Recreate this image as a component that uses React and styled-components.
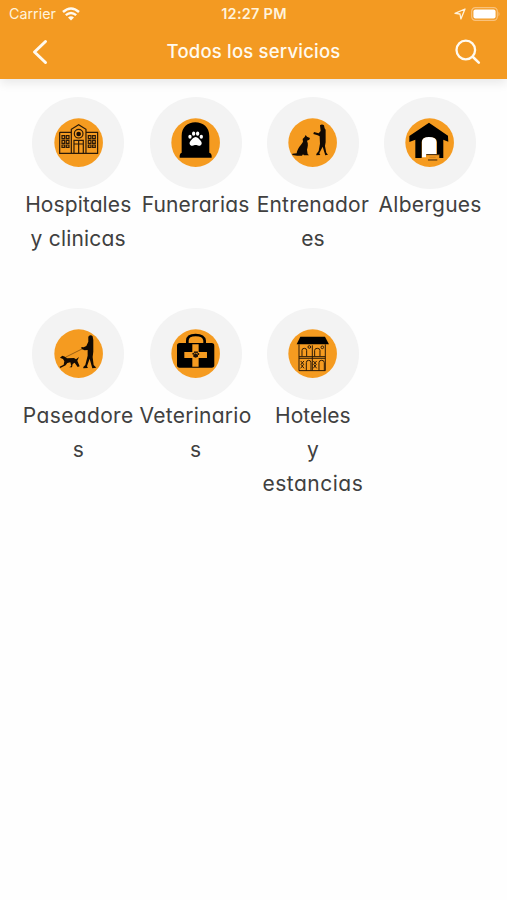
import styled, { createGlobalStyle } from "styled-components";

const GlobalStyle = createGlobalStyle`
  * {
    box-sizing: border-box;
  }
  body {
    margin: 0;
    background: #fefefe;
    font-family: Inter, "Open Sans", sans-serif;
  }
`;

const HospitalIcon = () => (
  <Glyph viewBox="77 78 148 148">
    <circle cx="151" cy="152" r="73" fill="#f59b20" />
    <g fill="none" stroke="#2b1a08" strokeWidth="3.6">
      <path d="M129 184V112L151 98L173 112V184" />
      <path d="M94 121H129M94 121V184H208V121H173" />
      <path d="M137 184V145H165V184M151 145V184M137 156H165" />
      <circle cx="151" cy="125" r="13" />
      <path d="M101 131h8v9h-8zM114 131h8v9h-8zM101 145h8v9h-8zM114 145h8v9h-8zM101 159h8v7h-8zM114 159h8v7h-8z" />
      <path d="M180 131h8v9h-8zM193 131h8v9h-8zM180 145h8v9h-8zM193 145h8v9h-8zM180 159h8v7h-8zM193 159h8v7h-8z" />
    </g>
    <circle cx="151" cy="126" r="7" fill="#1c1006" />
  </Glyph>
);

const GraveIcon = () => (
  <Glyph viewBox="75 78 148 148">
    <circle cx="149" cy="152" r="73" fill="#f59b20" />
    <path d="M107 182V132C107 106 125 91 148 91S190 106 190 132V182Q197 184 197 191V197H101V191Q101 184 107 182Z" fill="#000" />
    <g fill="#fff">
      <path d="M149 135C156 135 159 142 164 146C170 153 167 161 159 161C154 161 153 159 149 159S144 161 139 161C131 161 128 153 134 146C139 142 142 135 149 135Z" />
      <ellipse cx="132" cy="134" rx="5" ry="6" />
      <ellipse cx="143" cy="125" rx="5" ry="6.5" />
      <ellipse cx="155" cy="125" rx="5" ry="6.5" />
      <ellipse cx="166" cy="134" rx="5" ry="6" />
    </g>
  </Glyph>
);

const TrainerIcon = () => (
  <Glyph viewBox="75 78 148 148">
    <circle cx="149" cy="152" r="73" fill="#f59b20" />
    <path d="M88 185L101 184C103 169 115 158 120 149L119 141L125 135L128 129L132 134L141 138L139 143L132 146C137 156 134 166 132 173L134 186L138 190H123L120 187L117 191H103L88 189Z" fill="#120a03" />
    <path d="M171 100Q177 95 183 100L185 109L188 113V151L186 162L190 182L195 188L187 190L179 164L169 184L172 189L160 190V186L167 177L171 155L170 133L164 130L151 126L153 120L167 124L173 117Z" fill="#120a03" />
  </Glyph>
);

const ShelterIcon = () => (
  <Glyph viewBox="77 78 148 148">
    <circle cx="151" cy="152" r="73" fill="#f59b20" />
    <path d="M128 196V148Q128 134 149 134T171 148V196Z" fill="#fff" />
    <path d="M149 92L206 131L207 149L192 143V198H173V151Q173 135 149 135Q127 135 127 151V198H108V143L90 150V132Z" fill="#000" />
    <path d="M140 187H180V198H140Z" fill="#f59b20" />
    <path d="M141 188H180M146 204H174" stroke="#3a230b" strokeWidth="3" />
    <path d="M150 196H169" stroke="#c57513" strokeWidth="2" />
  </Glyph>
);

const WalkerIcon = () => (
  <Glyph viewBox="77 76 148 148">
    <circle cx="151" cy="150" r="73" fill="#f59b20" />
    <path d="M113 160L163 135" stroke="#70420c" strokeWidth="2" fill="none" />
    <path d="M95 162L102 156L110 159L116 164L137 163L143 167L152 160L147 171L154 188L148 190L139 177L133 181L131 191H123L129 187L126 176L117 178L112 185L96 193L94 189L106 183L108 173L104 166Z" fill="#120a03" />
    <path d="M180 99Q187 91 193 98L195 109L195 144L193 160L196 184L204 192L192 194L184 165L176 188L179 193L165 194V190L171 184L178 156V139L169 140L160 136L159 130L166 131L174 127L180 114Z" fill="#120a03" />
  </Glyph>
);

const VetIcon = () => (
  <Glyph viewBox="75 76 148 148">
    <circle cx="149" cy="150" r="73" fill="#f59b20" />
    <path d="M124 120V111Q124 94 149 94T176 111V120" fill="none" stroke="#000" strokeWidth="8" />
    <rect x="93" y="118" width="112" height="74" rx="8" fill="#000" />
    <path d="M139 122H158V145H183V163H158V189H139V163H115V145H139Z" fill="#f59b20" />
    <path d="M149 149L156 154V159L149 162L142 159V154Z" fill="#1c1006" />
    <g fill="#1c1006">
      <circle cx="142" cy="150" r="3" />
      <circle cx="147" cy="146" r="3" />
      <circle cx="153" cy="146" r="3" />
      <circle cx="157" cy="151" r="3" />
    </g>
  </Glyph>
);

const HotelIcon = () => (
  <Glyph viewBox="75 76 148 148">
    <circle cx="149" cy="150" r="73" fill="#f59b20" />
    <path d="M112 99H186L198 122H101Z" fill="#000" />
    <g fill="none" stroke="#2b1a08" strokeWidth="3">
      <path d="M108 122V201H187V122M148 125V201M108 159H187M108 164H187" />
      <path d="M117 158V140Q117 134 124 134T131 140V158M155 158V140Q155 134 163 134T171 140V158" />
      <path d="M130 201V177Q130 170 137 170T144 177V201M168 201V177Q168 170 176 170T184 177V201" />
      <circle cx="139" cy="130" r="4" />
      <circle cx="178" cy="131" r="4" />
      <path d="M113 172L122 182L113 194M123 172L114 182L123 194M151 172L160 182L151 194M161 172L152 182L161 194" />
    </g>
  </Glyph>
);

// each line: [text, letter spacing]
const services = [
  { icon: HospitalIcon, lines: [["Hospitales", 0.1], ["y clinicas", 0.2]] },
  { icon: GraveIcon, lines: [["Funerarias", 0.12]] },
  { icon: TrainerIcon, lines: [["Entrenador", 0.2], ["es", 0]] },
  { icon: ShelterIcon, lines: [["Albergues", 0.25]] },
  { icon: WalkerIcon, lines: [["Paseadore", 0.35], ["s", 0]] },
  { icon: VetIcon, lines: [["Veterinario", 0.27], ["s", 0]] },
  { icon: HotelIcon, lines: [["Hoteles", 0], ["y", 0], ["estancias", 0.5]] },
];

const App = () => {
  return (
    <>
      <GlobalStyle />
      <Screen>
        <Header>
          <StatusBar>
            <Carrier>
              Carrier
              <svg width="18" height="14" viewBox="0 0 18 14" fill="none" stroke="#fffaf0">
                <path d="M1 5Q9 -2 17 5" strokeWidth="2.5" />
                <path d="M3.8 8.2Q9 3.6 14.2 8.2" strokeWidth="2.4" />
                <path d="M6 10.4Q9 8 12 10.4L9 13.5Z" fill="#fffaf0" stroke="none" />
              </svg>
            </Carrier>
            <Clock>12:27 PM</Clock>
            <Indicators>
              <svg width="12" height="12" viewBox="0 0 12 12" fill="none" stroke="#fff3dc" strokeWidth="1.3" strokeLinejoin="round">
                <path d="M1 5.3L11 1L6.9 11L6 6Z" />
              </svg>
              <svg width="30" height="14" viewBox="0 0 30 14">
                <rect x="0.7" y="0.7" width="25.6" height="12.6" rx="3.6" fill="none" stroke="#f9c27c" strokeWidth="1.2" />
                <rect x="2.4" y="2.4" width="22.2" height="9.2" rx="2" fill="#fff" />
                <path d="M27.5 4.5Q29.5 7 27.5 9.5Z" fill="#f9c27c" />
              </svg>
            </Indicators>
          </StatusBar>
          <NavBar>
            <NavButton aria-label="Volver">
              <svg width="16" height="26" viewBox="0 0 16 26" fill="none" stroke="#fffaf0" strokeWidth="3" strokeLinecap="round" strokeLinejoin="round">
                <path d="M13.5 2.5L2.5 13L13.5 23.5" />
              </svg>
            </NavButton>
            <Title>Todos los servicios</Title>
            <NavButton $end aria-label="Buscar">
              <svg width="26" height="26" viewBox="0 0 26 26" fill="none" stroke="#fffaf0" strokeWidth="2.3" strokeLinecap="round">
                <circle cx="10.8" cy="11" r="9.3" />
                <path d="M17.7 17.8L23.8 23.6" strokeWidth="2.6" />
              </svg>
            </NavButton>
          </NavBar>
        </Header>
        <ServiceGrid>
          {services.map(({ icon: Icon, lines }) => (
            <Service key={lines[0][0]}>
              <Disc>
                <Icon />
              </Disc>
              <Label>
                {lines.map(([text, spacing]) => (
                  <Line key={text} $spacing={spacing}>
                    {text}
                  </Line>
                ))}
              </Label>
            </Service>
          ))}
        </ServiceGrid>
      </Screen>
    </>
  );
};

export default App;

const Screen = styled.div`
  width: 507px;
  height: 900px;
  overflow: hidden;
  background: #fefefe;
`;
const Header = styled.header`
  height: 79px;
  background: #f39a22;
  box-shadow: 0 4px 10px rgba(0, 0, 0, 0.09);
`;
const StatusBar = styled.div`
  display: grid;
  grid-template-columns: 1fr auto 1fr;
  align-items: center;
  height: 27px;
  padding: 0 6px 0 9px;
  color: #fff3dc;
  font-size: 14.3px;
`;
const Carrier = styled.div`
  display: flex;
  align-items: center;
  gap: 6px;
`;
const Clock = styled.div`
  margin-right: 2px;
  font-size: 14.5px;
  font-weight: 600;
  letter-spacing: 0.25px;
`;
const Indicators = styled.div`
  display: flex;
  align-items: center;
  justify-content: flex-end;
  gap: 5px;
`;
const NavBar = styled.div`
  display: grid;
  grid-template-columns: 1fr auto 1fr;
  align-items: center;
  height: 50px;
  padding: 0 26px 0 32px;
`;
const NavButton = styled.button`
  display: flex;
  justify-self: ${({ $end }) => ($end ? "end" : "start")};
  padding: 0;
  border: none;
  background: none;
`;
const Title = styled.h1`
  margin: 0 6px 2px 0;
  color: #fffaf0;
  font-size: 18.5px;
  font-weight: 500;
  line-height: 26px;
  letter-spacing: 0.2px;
  font-feature-settings: "cv11";
`;
const ServiceGrid = styled.main`
  display: grid;
  grid-template-columns: repeat(4, 117.3px);
  grid-auto-rows: 211px;
  padding: 18px 0 0 19.6px;
`;
const Service = styled.div`
  display: flex;
  flex-direction: column;
  align-items: center;
`;
const Disc = styled.div`
  display: flex;
  align-items: center;
  justify-content: center;
  width: 92px;
  height: 92px;
  flex-shrink: 0;
  border-radius: 50%;
  background: #f3f3f3;
`;
const Glyph = styled.svg`
  width: 49.3px;
  height: 49.3px;
`;
const Label = styled.div`
  margin-top: -0.6px;
  color: #404040;
  font-size: 21px;
  line-height: 33.6px;
  text-align: center;
  font-feature-settings: "cv11";
`;
const Line = styled.span`
  display: block;
  white-space: nowrap;
  letter-spacing: ${({ $spacing }) => $spacing}px;
`;
